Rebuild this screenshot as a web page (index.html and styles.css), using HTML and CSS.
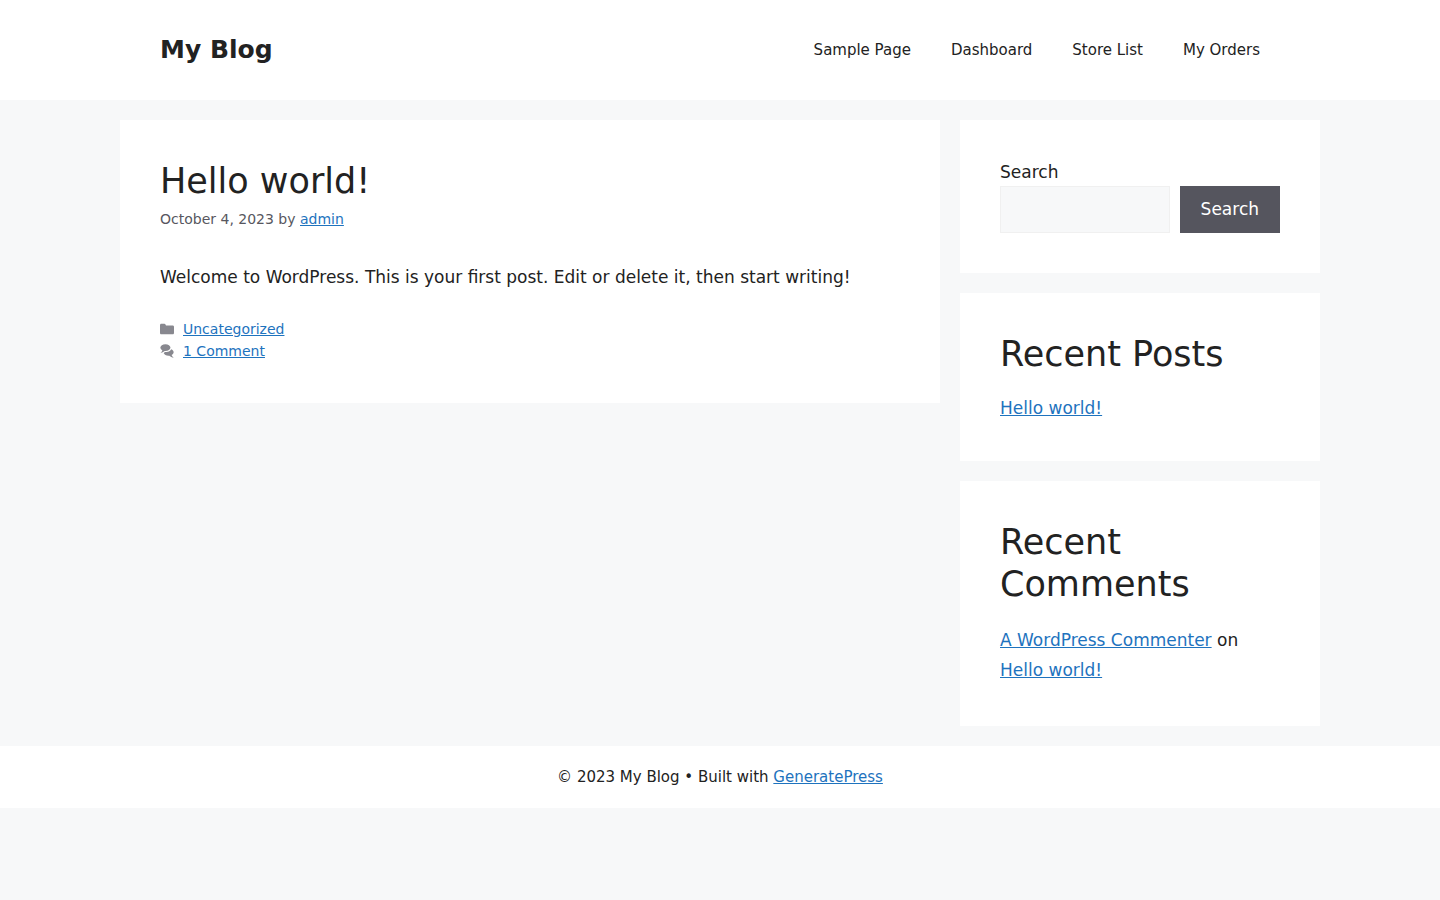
FILE: index.html
```html
<!DOCTYPE html>
<html lang="en">
<head>
<meta charset="utf-8">
<meta name="viewport" content="width=device-width, initial-scale=1">
<title>My Blog</title>
<link rel="stylesheet" href="styles.css">
</head>
<body>
<header class="site-header">
  <div class="header-inner">
    <a class="site-title" href="#">My Blog</a>
    <nav class="main-nav" aria-label="Primary">
      <a href="#">Sample Page</a>
      <a href="#">Dashboard</a>
      <a href="#">Store List</a>
      <a href="#">My Orders</a>
    </nav>
  </div>
</header>
<div class="content">
  <main class="posts">
    <article class="card">
      <h2 class="title">Hello world!</h2>
      <div class="entry-meta">October 4, 2023 by <a href="#">admin</a></div>
      <p class="entry-text">Welcome to WordPress. This is your first post. Edit or delete it, then start writing!</p>
      <footer class="entry-footer">
        <div class="meta-row">
          <svg class="icon" viewBox="0 0 512 512" aria-hidden="true"><path d="M0 112c0-26.510 21.490-48 48-48h110.014a48 48 0 0143.592 27.907l12.349 26.791A16 16 0 00228.486 128H464c26.510 0 48 21.490 48 48v224c0 26.510-21.490 48-48 48H48c-26.510 0-48-21.490-48-48V112z"/></svg>
          <a href="#">Uncategorized</a>
        </div>
        <div class="meta-row">
          <svg class="icon" viewBox="0 0 512 512" aria-hidden="true"><path d="M132.838 329.973a435.298 435.298 0 0016.769-9.004c13.363-7.574 26.587-16.142 37.419-25.507 7.544.597 15.270.925 23.098.925 54.905 0 105.634-15.311 143.285-41.280 23.728-16.365 43.115-37.692 54.155-62.645 54.739 22.205 91.498 63.272 91.498 110.286 0 42.186-29.558 79.498-75.090 102.828 23.460 49.216 75.090 101.709 75.090 101.709s-115.837-38.350-154.424-78.460c-9.956 1.120-20.297 1.758-30.793 1.758-88.727 0-162.927-43.071-181.007-100.610z"/><path d="M383.371 132.502c0 70.603-82.961 127.787-185.216 127.787-10.496 0-20.837-.639-30.793-1.757-38.587 40.093-154.424 78.429-154.424 78.429s51.630-52.472 75.090-101.670c-45.532-23.321-75.090-60.619-75.090-102.790C12.938 61.900 95.900 4.716 198.155 4.716 300.410 4.715 383.370 61.900 383.370 132.502z"/></svg>
          <a href="#">1 Comment</a>
        </div>
      </footer>
    </article>
  </main>
  <aside class="sidebar">
    <section class="card">
      <form class="search-form" role="search">
        <label for="search">Search</label>
        <div class="search-row">
          <input id="search" type="search">
          <button type="submit">Search</button>
        </div>
      </form>
    </section>
    <section class="card">
      <h2 class="title widget-title">Recent Posts</h2>
      <ul class="widget-list"><li><a href="#">Hello world!</a></li></ul>
    </section>
    <section class="card">
      <h2 class="title widget-title">Recent Comments</h2>
      <p class="comment"><a href="#">A WordPress Commenter</a> on <a href="#">Hello world!</a></p>
    </section>
  </aside>
</div>
<footer class="site-footer">© 2023 My Blog • Built with <a href="#">GeneratePress</a></footer>
</body>
</html>
```
FILE: styles.css
```css
* { box-sizing: border-box; }
body {
  margin: 0;
  background: #f7f8f9;
  color: #222222;
  font-family: "DejaVu Sans", sans-serif;
  font-size: 17px;
  line-height: 26px;
}
a { color: #1e73be; }
.site-header, .site-footer { background: #ffffff; }
.header-inner {
  max-width: 1200px;
  margin: 0 auto;
  padding: 20px 40px;
  display: flex;
  align-items: center;
  justify-content: space-between;
}
.site-title {
  color: #222222;
  font-size: 25px;
  font-weight: bold;
  line-height: 30px;
  text-decoration: none;
}
.main-nav { display: flex; padding-right: 20px; gap: 40px; }
.main-nav a {
  color: #222222;
  font-size: 15px;
  line-height: 60px;
  text-decoration: none;
}
.content {
  max-width: 1200px;
  margin: 0 auto;
  padding: 20px 0;
  display: flex;
  align-items: flex-start;
  gap: 20px;
}
.posts { flex: 1; min-width: 0; }
.sidebar {
  width: 30%;
  display: flex;
  flex-direction: column;
  gap: 20px;
}
.card { background: #ffffff; padding: 40px; }
.title {
  margin: 0;
  font-size: 35px;
  font-weight: normal;
  line-height: 42px;
}
.entry-meta {
  margin-top: 6px;
  color: #575760;
  font-size: 14px;
  line-height: 22px;
}
.entry-text { margin: 34px 0 28px; }
.entry-footer {
  padding-bottom: 1px;
  color: #575760;
  font-size: 14px;
  line-height: 22px;
}
.meta-row { display: flex; align-items: center; gap: 9px; }
.icon { width: 14px; height: 14px; fill: currentColor; opacity: 0.7; }
.search-row { display: flex; gap: 10px; }
.search-row input {
  flex: 1;
  min-width: 0;
  border: 1px solid #f0f0f0;
  background: #f7f8f9;
  color: #222222;
  font: inherit;
  padding: 8px;
}
.search-row button {
  border: 0;
  background: #55555e;
  color: #ffffff;
  font: inherit;
  line-height: 27px;
  padding: 10px 21px;
}
.search-form label { display: block; margin-bottom: 2px; line-height: 24px; }
.widget-title { margin-bottom: 20px; }
.widget-list { margin: 0; padding: 0; list-style: none; }
.comment { margin: 0; padding-bottom: 1px; line-height: 30px; }
.site-footer {
  padding: 20px 40px;
  text-align: center;
  font-size: 15px;
  line-height: 22px;
}
```
